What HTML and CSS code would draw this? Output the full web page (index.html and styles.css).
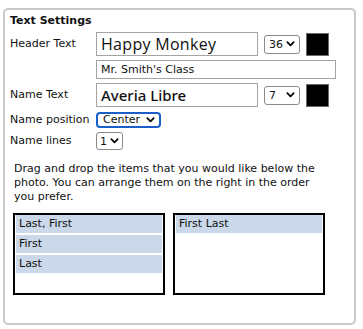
FILE: index.html
```html
<!DOCTYPE html>
<html>
<head>
<meta charset="utf-8">
<link rel="stylesheet" href="styles.css">
</head>
<body>
<div class="panel">
  <div class="title">Text Settings</div>
  <div class="form">
    <label class="lbl">Header Text</label>
    <div class="ctrl">
      <input class="font-input happy" value="Happy Monkey">
      <select class="sel sel-size"><option>36</option></select>
      <span class="swatch"></span>
    </div>
    <span></span>
    <div class="ctrl"><input class="wide-input" value="Mr. Smith's Class"></div>
    <label class="lbl">Name Text</label>
    <div class="ctrl">
      <input class="font-input averia" value="Averia Libre">
      <select class="sel sel-size"><option>7</option></select>
      <span class="swatch"></span>
    </div>
    <label class="lbl">Name position</label>
    <div class="ctrl"><select class="sel sel-pos"><option>Center</option></select></div>
    <label class="lbl">Name lines</label>
    <div class="ctrl"><select class="sel sel-lines"><option>1</option></select></div>
  </div>
  <p class="help">Drag and drop the items that you would like below the photo. You can arrange them on the right in the order you prefer.</p>
  <div class="lists">
    <div class="list">
      <div class="item">Last, First</div>
      <div class="item">First</div>
      <div class="item">Last</div>
    </div>
    <div class="list">
      <div class="item">First Last</div>
    </div>
  </div>
</div>
</body>
</html>
```
FILE: styles.css
```css
* { box-sizing: border-box; }
body {
  margin: 0;
  background: #fff;
  font-family: "DejaVu Sans", Verdana, sans-serif;
  font-size: 11px;
  color: #111;
}
.panel {
  margin: 8px 0 0 3px;
  width: 353px;
  height: 317px;
  border: 2px solid #c9c9c9;
  border-radius: 5px;
  padding: 4px 5px 0 5px;
}
.title {
  font-weight: bold;
  font-size: 11px;
  line-height: 14px;
  height: 14px;
  margin-bottom: 4px;
}
.form {
  display: grid;
  grid-template-columns: 86px 1fr;
  row-gap: 4px;
  align-items: center;
}
.lbl {
  line-height: 14px;
}
.ctrl {
  display: flex;
  align-items: center;
  gap: 6px;
}
input {
  font: inherit;
  color: #111;
  border: 1px solid #a3a3a3;
  border-radius: 0;
  padding: 0 4px;
  margin: 0;
  outline: none;
}
.font-input {
  width: 162px;
  height: 24px;
}
.happy {
  font-family: "Open Sans", sans-serif;
  font-size: 16px;
  letter-spacing: 0.3px;
}
.averia {
  font-family: "Noto Sans", sans-serif;
  font-size: 15px;
  font-weight: 500;
}
.wide-input {
  width: 240px;
  height: 19px;
  font-size: 11px;
}
.sel {
  appearance: none;
  -webkit-appearance: none;
  font: inherit;
  font-size: 11px;
  color: #111;
  margin: 0;
  border: 1px solid #8a8a8a;
  border-radius: 3px;
  background: #fff url("data:image/svg+xml;utf8,<svg xmlns='http://www.w3.org/2000/svg' width='10' height='7' viewBox='0 0 10 7'><path d='M1.3 1.3 L5 5 L8.7 1.3' fill='none' stroke='%23000' stroke-width='2' stroke-linecap='round' stroke-linejoin='round'/></svg>") no-repeat;
  background-size: 9px 6px;
  padding: 0 0 0 4px;
  height: 19px;
  line-height: 17px;
}
.sel-size {
  width: 36px;
  background-position: right 4px center;
}
.sel-pos {
  width: 65px;
  height: 16px;
  line-height: 12px;
  border: 2px solid #1a5fc7;
  border-radius: 4px;
  padding-left: 5px;
  background-position: right 4px center;
  margin-top: 1px;
}
.sel-lines {
  width: 27px;
  height: 18px;
  padding-left: 3px;
  background-position: right 3px center;
}
.swatch {
  width: 23px;
  height: 23px;
  background: #000;
  border: 1px solid #6a6a6a;
}
.help {
  margin: 12px 0 0 4px;
  width: 312px;
  line-height: 14px;
}
.lists {
  display: flex;
  gap: 8px;
  margin: 9px 0 0 3px;
}
.list {
  width: 152px;
  height: 82px;
  border: 2px solid #000;
  padding: 0 1px;
  display: flex;
  flex-direction: column;
  gap: 2px;
}
.item {
  background: #cbd8e9;
  height: 18px;
  line-height: 18px;
  padding-left: 3px;
}
```
